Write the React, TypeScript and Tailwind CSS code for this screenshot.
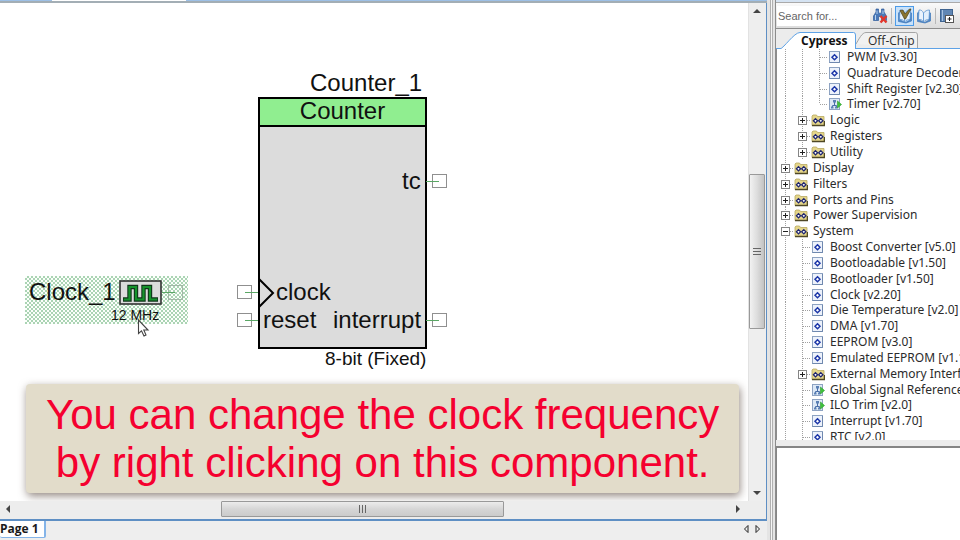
import React from "react";

type Cell = "line" | "tee" | "last" | "plus" | "minus" | "none";
type Kind = "component" | "folder" | "schematic";
type Row = { cells: Cell[]; kind: Kind; label: string };

const rows: Row[] = [
  { cells: ["line", "line", "tee"], kind: "component", label: "PWM [v3.30]" },
  { cells: ["line", "line", "tee"], kind: "component", label: "Quadrature Decoder [v3.0]" },
  { cells: ["line", "line", "tee"], kind: "component", label: "Shift Register [v2.30]" },
  { cells: ["line", "line", "last"], kind: "schematic", label: "Timer [v2.70]" },
  { cells: ["line", "plus"], kind: "folder", label: "Logic" },
  { cells: ["line", "plus"], kind: "folder", label: "Registers" },
  { cells: ["line", "plus"], kind: "folder", label: "Utility" },
  { cells: ["plus"], kind: "folder", label: "Display" },
  { cells: ["plus"], kind: "folder", label: "Filters" },
  { cells: ["plus"], kind: "folder", label: "Ports and Pins" },
  { cells: ["plus"], kind: "folder", label: "Power Supervision" },
  { cells: ["minus"], kind: "folder", label: "System" },
  { cells: ["line", "tee"], kind: "component", label: "Boost Converter [v5.0]" },
  { cells: ["line", "tee"], kind: "component", label: "Bootloadable [v1.50]" },
  { cells: ["line", "tee"], kind: "component", label: "Bootloader [v1.50]" },
  { cells: ["line", "tee"], kind: "component", label: "Clock [v2.20]" },
  { cells: ["line", "tee"], kind: "component", label: "Die Temperature [v2.0]" },
  { cells: ["line", "tee"], kind: "component", label: "DMA [v1.70]" },
  { cells: ["line", "tee"], kind: "component", label: "EEPROM [v3.0]" },
  { cells: ["line", "tee"], kind: "component", label: "Emulated EEPROM [v1.10]" },
  { cells: ["line", "plus"], kind: "folder", label: "External Memory Interface" },
  { cells: ["line", "tee"], kind: "schematic", label: "Global Signal Reference" },
  { cells: ["line", "tee"], kind: "schematic", label: "ILO Trim [v2.0]" },
  { cells: ["line", "tee"], kind: "component", label: "Interrupt [v1.70]" },
  { cells: ["line", "tee"], kind: "component", label: "RTC [v2.0]" },
];

function Guide({ cell }: { cell: Cell }) {
  const box = cell === "plus" || cell === "minus";
  const svg = (
    <svg width="17" height="16" viewBox="0 0 17 16" className="block" aria-hidden="true">
      <g stroke="#a0a0a0" strokeDasharray="1 1" fill="none">
        {cell !== "none" && <path d={cell === "last" ? "M8.5 0V8" : "M8.5 0V16"} />}
        {cell !== "line" && cell !== "none" && <path d="M9 8.5H17" />}
      </g>
      {box && (
        <>
          <rect x="4.5" y="4.5" width="8" height="8" fill="#fff" stroke="#858585" />
          <path d={cell === "plus" ? "M6 8.5H11M8.5 6V11" : "M6 8.5H11"} stroke="#222" />
        </>
      )}
    </svg>
  );
  return box ? (
    <button type="button" aria-label={cell === "plus" ? "Expand" : "Collapse"} className="shrink-0">
      {svg}
    </button>
  ) : (
    <span className="shrink-0">{svg}</span>
  );
}

function RowIcon({ kind }: { kind: Kind }) {
  return (
    <svg width="14" height="14" viewBox="0 0 14 14" className="shrink-0" aria-hidden="true">
      {kind === "component" && (
        <>
          <rect x="1.5" y="1.5" width="10" height="11" fill="#edf2fb" stroke="#8ea3c2" />
          <path d="M1.5 12.5H11.5V2" fill="none" stroke="#6f88ae" />
          <path d="M6.5 4.7L9 7.2L6.5 9.7L4 7.2Z" fill="#fff" stroke="#1d37a8" strokeWidth="1.5" />
        </>
      )}
      {kind === "folder" && (
        <>
          <path d="M1 3L2 2H5.5L6.5 3.5H13V12.5H1Z" fill="#e5d68a" stroke="#b8a860" strokeWidth="0.8" />
          <path d="M1 12.5H13.5V8" fill="none" stroke="#4f4825" strokeWidth="1.4" />
          <path d="M4.5 5.7L6.6 7.8L4.5 9.9L2.4 7.8ZM9.8 5.7L11.9 7.8L9.8 9.9L7.7 7.8Z" fill="#fff" stroke="#20266e" strokeWidth="1.3" />
        </>
      )}
      {kind === "schematic" && (
        <>
          <rect x="1.5" y="1.5" width="10" height="11" fill="#dce8f5" stroke="#8ea3c2" />
          <path d="M4.5 11V8.5H8.5V11M6.5 8.5V5" fill="none" stroke="#4a6ea8" />
          <path d="M5 3H8V5.5H5ZM3 9.5H5.5V11.5H3ZM7 9.5H9.5V11.5H7Z" fill="#5b80b5" />
          <path d="M9.5 4L13.5 7.5L9.5 11Z" fill="#3fc23b" stroke="#2c9a2c" strokeWidth="0.6" />
        </>
      )}
    </svg>
  );
}

function ScrollArrow({ dir, label }: { dir: "up" | "down" | "left" | "right"; label: string }) {
  const shapes = {
    up: "M1 7L5 3L9 7Z",
    down: "M1 3L5 7L9 3Z",
    left: "M7 1L3 5L7 9Z",
    right: "M3 1L7 5L3 9Z",
  };
  return (
    <button type="button" aria-label={label} className="flex size-4 shrink-0 items-center justify-center">
      <svg width="10" height="10" viewBox="0 0 10 10">
        <path d={shapes[dir]} fill="#444" />
      </svg>
    </button>
  );
}

function Pin({ side, className }: { side: "left" | "right"; className: string }) {
  return (
    <svg width="22" height="16" viewBox="0 0 22 16" className={"absolute " + className} aria-hidden="true">
      {side === "left" ? (
        <>
          <rect x="0.5" y="1.5" width="14" height="13" fill="#fff" stroke="#8f8f8f" />
          <path d="M8 8.5H21" stroke="#5aa765" />
        </>
      ) : (
        <>
          <rect x="7.5" y="1.5" width="14" height="13" fill="#fff" stroke="#8f8f8f" />
          <path d="M1 8.5H14" stroke="#5aa765" />
        </>
      )}
    </svg>
  );
}

function Schematic() {
  return (
    <div className="relative min-h-0 min-w-0 flex-1 overflow-hidden bg-white text-2xl leading-7 text-[#111]">
      {/* Counter block */}
      <div className="absolute top-[66px] left-[310px]">Counter_1</div>
      <div className="absolute top-[94px] left-[258px] h-[252px] w-[169px] border-2 border-black bg-[#dcdcdc]">
        <div className="border-b-2 border-black bg-[#90ee90] pb-[2px] text-center leading-6">Counter</div>
      </div>
      <div className="absolute top-[164px] left-[402px]">tc</div>
      <svg width="18" height="30" viewBox="0 0 18 30" className="absolute top-[275px] left-[258px]" aria-hidden="true">
        <path d="M1 1L15 15L1 29" fill="none" stroke="#000" strokeWidth="2" />
      </svg>
      <div className="absolute top-[275px] left-[276px]">clock</div>
      <div className="absolute top-[303px] left-[263px]">reset</div>
      <div className="absolute top-[303px] left-[333px]">interrupt</div>
      <div className="absolute top-[342px] left-[325px] text-[19px]">8-bit (Fixed)</div>
      <Pin side="right" className="top-[170px] left-[425px]" />
      <Pin side="right" className="top-[309px] left-[425px]" />
      <Pin side="left" className="top-[281px] left-[237px]" />
      <Pin side="left" className="top-[309px] left-[237px]" />

      {/* Selected clock source */}
      <div className="absolute top-[273px] left-[25px] h-[48px] w-[163px] bg-[repeating-conic-gradient(#abd4b4_0_25%,#fbfffb_0_50%)] bg-[length:4px_4px]" />
      <div className="absolute top-[275px] left-[29px]">Clock_1</div>
      <svg width="70" height="26" viewBox="0 0 70 26" className="absolute top-[276px] left-[118px]" aria-hidden="true">
        <rect x="2" y="2" width="41" height="23" fill="#dcdcdc" stroke="#333" strokeWidth="1.6" />
        <path d="M5 20.5H11.5V8H18V20.5H25.500V8H32V20.5H40" fill="none" stroke="#10351a" strokeWidth="4.4" />
        <path d="M5.8 20.5H11.5V8H18V20.5H25.500V8H32V20.5H39.2" fill="none" stroke="#15932c" strokeWidth="2.2" />
        <rect x="50.5" y="6.5" width="14" height="14" fill="none" stroke="#a3b8a7" />
        <path d="M44 13.5H57" stroke="#5aa765" />
      </svg>
      <div className="absolute top-[302px] left-[111px] text-sm leading-5">12 MHz</div>
      <svg width="14" height="20" viewBox="0 0 14 20" className="absolute top-[316px] left-[137px]" aria-hidden="true">
        <path d="M1.5 1V14.5L4.5 11.8L7 17L9 16L6.8 11H11Z" fill="#fff" stroke="#444" strokeWidth="1.1" />
      </svg>

      {/* Instruction banner */}
      <div className="absolute top-[381px] left-[26px] rounded-[4px] bg-[#e2dcca] px-5 pt-[7px] pb-[6px] text-center text-[42px] leading-[48px] whitespace-nowrap text-[#f5002f] shadow-[1px_3px_8px_rgba(60,40,30,0.55)]">
        You can change the clock frequency
        <br />
        by right clicking on this component.
      </div>
    </div>
  );
}

function Editor() {
  return (
    <main className="flex min-w-0 flex-1 flex-col">
      <div className="flex h-[3px] shrink-0 border-b-2 border-[#a3aeb5] bg-[#9dc0e6]">
        <div className="ml-[52px] w-[134px] bg-white" />
      </div>
      <div className="flex min-h-0 flex-1 flex-col border-r border-b-2 border-[#5e8fc4]">
        <div className="flex min-h-0 flex-1">
          <Schematic />
          <div className="flex w-[18px] shrink-0 flex-col items-start border-l border-[#e2e2e2] bg-[#eeeeee]">
            <ScrollArrow dir="up" label="Scroll up" />
            <div className="flex-[155]" />
            <div className="flex w-4 flex-[154] flex-col items-center justify-center gap-[2px] rounded-[1px] border border-[#999] bg-linear-to-r from-[#f2f2f2] via-[#dddddd] to-[#c3c3c3]">
              <span className="h-px w-2 bg-[#666]" />
              <span className="h-px w-2 bg-[#666]" />
              <span className="h-px w-2 bg-[#666]" />
            </div>
            <div className="flex-[156]" />
            <ScrollArrow dir="down" label="Scroll down" />
          </div>
        </div>
        <div className="flex h-[18px] shrink-0 items-start bg-[#ededed] pr-[20px]">
          <ScrollArrow dir="left" label="Scroll left" />
          <div className="flex-[206]" />
          <div className="flex h-4 flex-[281] items-center justify-center gap-[2px] rounded-[1px] border border-[#999] bg-linear-to-b from-[#ececec] via-[#d6d6d6] to-[#cbcbcb]">
            <span className="h-2 w-px bg-[#666]" />
            <span className="h-2 w-px bg-[#666]" />
            <span className="h-2 w-px bg-[#666]" />
          </div>
          <div className="flex-[227]" />
          <ScrollArrow dir="right" label="Scroll right" />
        </div>
      </div>
      <div className="flex h-[19px] shrink-0 items-start justify-between bg-[#eeeeee] font-['Open_Sans',sans-serif] text-xs">
        <button type="button" className="h-[17px] w-[46px] rounded-b-[2px] border-r-2 border-b border-[#84b4e8] bg-white text-left leading-4 font-bold text-[#1a1a1a]">
          Page 1
        </button>
        <div className="flex pt-[3px] pr-[3px]">
          <button type="button" aria-label="Previous page" className="px-px">
            <svg width="10" height="10" viewBox="0 0 10 10">
              <path d="M7 1.5L3.5 5L7 8.5Z" fill="none" stroke="#222" />
            </svg>
          </button>
          <button type="button" aria-label="Next page" className="px-px">
            <svg width="10" height="10" viewBox="0 0 10 10">
              <path d="M3 1.5L6.5 5L3 8.5Z" fill="none" stroke="#222" />
            </svg>
          </button>
        </div>
      </div>
    </main>
  );
}

function Book({ marked }: { marked?: boolean }) {
  return (
    <svg width="16" height="16" viewBox="0 0 16 16" aria-hidden="true">
      <path d="M1.5 5L3 3.500V12L8.500 14.500L13 12V4L14.5 5V13L9 15L1.5 13.5Z" fill="#4f86c6" stroke="#3f78ba" strokeWidth="0.7" />
      <path d="M3 2C5.500 1.800 6.500 3 7.500 5V14C6.500 12 5 11.200 2.500 11.500Z" fill="#eaf3fd" stroke="#5c93cf" strokeWidth="0.8" />
      <path d="M13.500 2C11 2 9 3 7.500 5V14C9 12 11 11.500 13 11.500Z" fill="#e2effc" stroke="#5c93cf" strokeWidth="0.8" />
      {marked && <path d="M3 2.500L6 2L8 6L12.500 1H14L8.5 11H7.5Z" fill="#8a7430" stroke="#4e4218" strokeWidth="0.7" />}
    </svg>
  );
}

function Toolbar() {
  return (
    <div className="flex h-[25px] shrink-0 items-center bg-linear-to-b from-[#fafafa] to-[#dcdcdc] pl-px">
      <input
        aria-label="Search components"
        placeholder="Search for..."
        className="h-5 w-[93px] shrink-0 bg-white pl-px font-['Liberation_Sans',sans-serif] text-[11px] text-[#555] outline-none placeholder:text-[#666]"
      />
      <button type="button" aria-label="Clear search" className="ml-[2px] shrink-0">
        <svg width="16" height="16" viewBox="0 0 16 16" aria-hidden="true">
          <path d="M4 1H6.500V4L7.500 5.500H8.500L9.500 4V1H12V4L14.500 8V12.500H9.500V8.500H6.500V12.500H1.500V8L4 4Z" fill="#4a79b8" stroke="#2f5c9c" strokeWidth="0.7" />
          <path d="M3.500 7V12M5 2.500V6M11 2.500V6" stroke="#b9d2ee" />
          <path d="M8.5 8L14.5 14.5M14.5 8L8.5 14.5" stroke="#e2372c" strokeWidth="2.4" />
        </svg>
      </button>
      <span className="mx-[3px] h-4 w-px shrink-0 bg-[#b8b8b8]" />
      <button type="button" aria-label="Show catalog" aria-pressed="true" className="flex h-5 w-[19px] shrink-0 items-center justify-center border border-[#4c9be8] bg-[#c9e2fa]">
        <Book marked />
      </button>
      <button type="button" aria-label="Open datasheet" className="ml-[2px] shrink-0">
        <Book />
      </button>
      <span className="mx-[3px] h-4 w-px shrink-0 bg-[#b8b8b8]" />
      <button type="button" aria-label="Add library" className="shrink-0">
        <svg width="16" height="16" viewBox="0 0 16 16" aria-hidden="true">
          <rect x="1.5" y="1.5" width="12" height="12" fill="#5f86b4" stroke="#3e6491" />
          <path d="M3.5 2V13" stroke="#a9c4e2" />
          <rect x="6.5" y="7.5" width="8" height="7" fill="#fff" stroke="#555" />
          <path d="M8.5 11H12.5M10.5 9V13" stroke="#222" />
        </svg>
      </button>
    </div>
  );
}

function Catalog() {
  return (
    <aside className="flex w-[185px] shrink-0 flex-col overflow-hidden border-l border-[#8c8c8c] font-['Noto_Sans','Open_Sans',sans-serif] text-xs text-[#2b2b2b]">
      <div className="h-[3px] shrink-0 border-b border-[#aaa] bg-[#d5e3f2]" />
      <Toolbar />
      <div className="flex h-[21px] shrink-0 border-t border-b border-t-[#8c8c8c] border-b-[#5ea2e6] bg-[#ececec] pt-[3px] pl-1">
        <button type="button" className="relative h-[17px] w-[76px] text-left">
          <svg width="76" height="17" viewBox="0 0 76 17" className="absolute inset-0" aria-hidden="true">
            <path d="M0 17C4 16 14 0.5 20 0.5H73.5Q75.5 0.5 75.5 3V17" fill="#fff" stroke="#5ea2e6" />
          </svg>
          <span className="relative block pl-[21px] font-['Open_Sans',sans-serif] leading-[17px] font-bold text-[#111]">
            Cypress
          </span>
        </button>
        <button type="button" className="relative h-4 w-[62px] text-left">
          <svg width="62" height="16" viewBox="0 0 62 16" className="absolute inset-0" aria-hidden="true">
            <path d="M0 12C3 7 6 0.5 10 0.5H59.5Q61.5 0.5 61.5 3V16" fill="#f1f1f1" stroke="#a5a5a5" />
          </svg>
          <span className="relative block pl-3 font-['Open_Sans',sans-serif] leading-[17px]">Off-Chip</span>
        </button>
      </div>
      <div className="min-h-0 flex-[391] overflow-hidden border-l border-[#8c8c8c] bg-white">
        <ul className="flex h-[396px] flex-col">
          {rows.map((row) => (
            <li key={row.label} className="flex min-h-0 flex-1 items-center whitespace-nowrap">
              {row.cells.map((cell, i) => (
                <Guide key={i} cell={cell} />
              ))}
              <RowIcon kind={row.kind} />
              <span className="pl-[5px] leading-4">{row.label}</span>
            </li>
          ))}
        </ul>
      </div>
      <div className="h-[6px] shrink-0 bg-[#ececec]" />
      <div className="flex-[92] border-t-2 border-l border-[#858585] bg-white" />
    </aside>
  );
}

export default function App() {
  return (
    <div className="flex h-screen overflow-hidden bg-[#eeeeee] font-['Liberation_Sans',Arial,sans-serif]">
      <Editor />
      <div className="flex w-2 shrink-0 justify-center bg-[#e4e4e4]">
        <span className="w-[3px] border-x border-[#b0b0b0] bg-[#f5f5f5]" />
      </div>
      <Catalog />
    </div>
  );
}
